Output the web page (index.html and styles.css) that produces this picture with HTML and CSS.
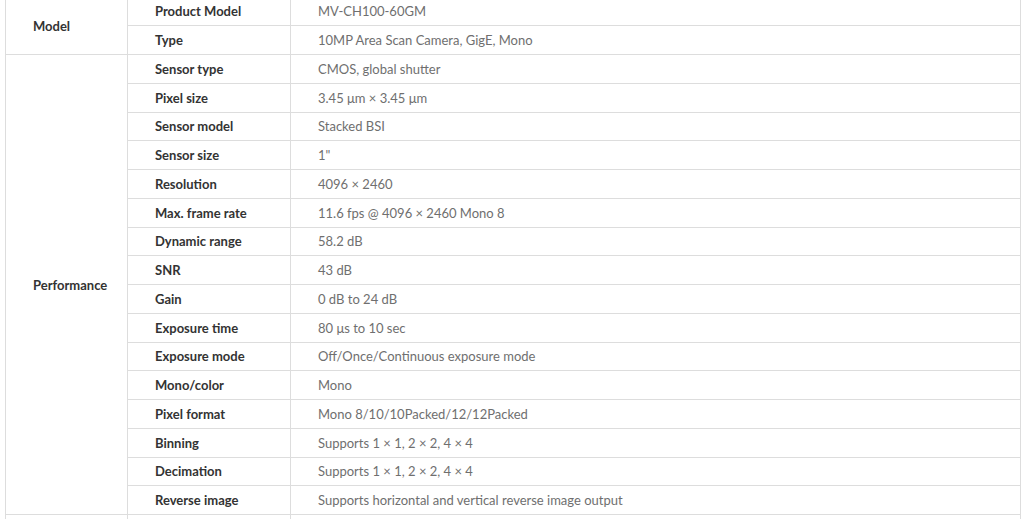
FILE: index.html
```html
<!DOCTYPE html>
<html lang="en">
<head>
<meta charset="utf-8">
<title>Specifications</title>
<link rel="stylesheet" href="styles.css">
</head>
<body>
<table class="spec">
  <colgroup>
    <col class="c-group">
    <col class="c-label">
    <col class="c-value">
  </colgroup>
  <tbody>
    <tr><th class="group" rowspan="2">Model</th><th class="label">Product Model</th><td class="value">MV-CH100-60GM</td></tr>
    <tr><th class="label">Type</th><td class="value">10MP Area Scan Camera, GigE, Mono</td></tr>
    <tr><th class="group" rowspan="16">Performance</th><th class="label">Sensor type</th><td class="value">CMOS, global shutter</td></tr>
    <tr><th class="label">Pixel size</th><td class="value">3.45 μm × 3.45 μm</td></tr>
    <tr><th class="label">Sensor model</th><td class="value">Stacked BSI</td></tr>
    <tr><th class="label">Sensor size</th><td class="value">1"</td></tr>
    <tr><th class="label">Resolution</th><td class="value">4096 × 2460</td></tr>
    <tr><th class="label">Max. frame rate</th><td class="value">11.6 fps @ 4096 × 2460 Mono 8</td></tr>
    <tr><th class="label">Dynamic range</th><td class="value">58.2 dB</td></tr>
    <tr><th class="label">SNR</th><td class="value">43 dB</td></tr>
    <tr><th class="label">Gain</th><td class="value">0 dB to 24 dB</td></tr>
    <tr><th class="label">Exposure time</th><td class="value">80 μs to 10 sec</td></tr>
    <tr><th class="label">Exposure mode</th><td class="value">Off/Once/Continuous exposure mode</td></tr>
    <tr><th class="label">Mono/color</th><td class="value">Mono</td></tr>
    <tr><th class="label">Pixel format</th><td class="value">Mono 8/10/10Packed/12/12Packed</td></tr>
    <tr><th class="label">Binning</th><td class="value">Supports 1 × 1, 2 × 2, 4 × 4</td></tr>
    <tr><th class="label">Decimation</th><td class="value">Supports 1 × 1, 2 × 2, 4 × 4</td></tr>
    <tr><th class="label">Reverse image</th><td class="value">Supports horizontal and vertical reverse image output</td></tr>
    <tr class="next"><th class="group"></th><th class="label"></th><td class="value"></td></tr>
  </tbody>
</table>
</body>
</html>
```

FILE: styles.css
```css
html, body {
  margin: 0;
  padding: 0;
  background: #ffffff;
  overflow: hidden;
}

body {
  font-family: Lato, "Open Sans", "Liberation Sans", sans-serif;
  font-size: 13px;
}

.spec {
  border-collapse: collapse;
  table-layout: fixed;
  width: 1016px;
  margin: -3.5px 0 0 5px;
}

.c-group { width: 122px; }
.c-label { width: 163px; }
.c-value { width: auto; }

.spec tr {
  height: 28.75px;
}

.spec th,
.spec td {
  border: 1px solid #dddddd;
  padding: 0 0 0 27px;
  text-align: left;
  vertical-align: middle;
  line-height: 18px;
  white-space: nowrap;
}

.group,
.label {
  font-weight: 700;
  color: #333333;
}

.value {
  font-weight: 400;
  color: #6f6f6f;
}
```
